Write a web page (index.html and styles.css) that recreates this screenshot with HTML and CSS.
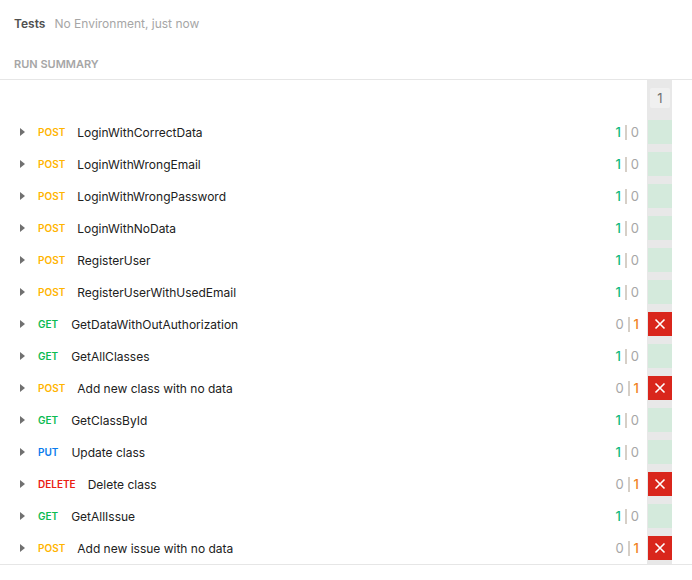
FILE: index.html
```html
<!DOCTYPE html>
<html>
<head>
<meta charset="utf-8">
<link rel="stylesheet" href="styles.css">
</head>
<body>
<header class="top">
  <span class="title">Tests</span>
  <span class="sub">No Environment, just now</span>
</header>
<div class="section">RUN SUMMARY</div>
<div class="summary">
  <div class="row head">
    <div class="main"></div>
    <div class="col"><div class="iter">1</div></div>
  </div>
  <div class="row"><div class="main"><span class="caret"></span><span class="m post">POST</span><span class="name">LoginWithCorrectData</span></div><div class="count"><span class="pass">1</span><span class="bar"></span><span class="zero">0</span></div><div class="col"><div class="cell ok"></div></div></div>
  <div class="row"><div class="main"><span class="caret"></span><span class="m post">POST</span><span class="name">LoginWithWrongEmail</span></div><div class="count"><span class="pass">1</span><span class="bar"></span><span class="zero">0</span></div><div class="col"><div class="cell ok"></div></div></div>
  <div class="row"><div class="main"><span class="caret"></span><span class="m post">POST</span><span class="name">LoginWithWrongPassword</span></div><div class="count"><span class="pass">1</span><span class="bar"></span><span class="zero">0</span></div><div class="col"><div class="cell ok"></div></div></div>
  <div class="row"><div class="main"><span class="caret"></span><span class="m post">POST</span><span class="name">LoginWithNoData</span></div><div class="count"><span class="pass">1</span><span class="bar"></span><span class="zero">0</span></div><div class="col"><div class="cell ok"></div></div></div>
  <div class="row"><div class="main"><span class="caret"></span><span class="m post">POST</span><span class="name">RegisterUser</span></div><div class="count"><span class="pass">1</span><span class="bar"></span><span class="zero">0</span></div><div class="col"><div class="cell ok"></div></div></div>
  <div class="row"><div class="main"><span class="caret"></span><span class="m post">POST</span><span class="name">RegisterUserWithUsedEmail</span></div><div class="count"><span class="pass">1</span><span class="bar"></span><span class="zero">0</span></div><div class="col"><div class="cell ok"></div></div></div>
  <div class="row"><div class="main"><span class="caret"></span><span class="m get">GET</span><span class="name">GetDataWithOutAuthorization</span></div><div class="count"><span class="zero">0</span><span class="bar"></span><span class="fail">1</span></div><div class="col"><div class="cell bad"><svg viewBox="0 0 12 12" width="12" height="12"><path d="M1.5 1.5L10.5 10.5M10.5 1.5L1.5 10.5" stroke="#fff" stroke-width="1.6" fill="none"/></svg></div></div></div>
  <div class="row"><div class="main"><span class="caret"></span><span class="m get">GET</span><span class="name">GetAllClasses</span></div><div class="count"><span class="pass">1</span><span class="bar"></span><span class="zero">0</span></div><div class="col"><div class="cell ok"></div></div></div>
  <div class="row"><div class="main"><span class="caret"></span><span class="m post">POST</span><span class="name">Add new class with no data</span></div><div class="count"><span class="zero">0</span><span class="bar"></span><span class="fail">1</span></div><div class="col"><div class="cell bad"><svg viewBox="0 0 12 12" width="12" height="12"><path d="M1.5 1.5L10.5 10.5M10.5 1.5L1.5 10.5" stroke="#fff" stroke-width="1.6" fill="none"/></svg></div></div></div>
  <div class="row"><div class="main"><span class="caret"></span><span class="m get">GET</span><span class="name">GetClassById</span></div><div class="count"><span class="pass">1</span><span class="bar"></span><span class="zero">0</span></div><div class="col"><div class="cell ok"></div></div></div>
  <div class="row"><div class="main"><span class="caret"></span><span class="m put">PUT</span><span class="name">Update class</span></div><div class="count"><span class="pass">1</span><span class="bar"></span><span class="zero">0</span></div><div class="col"><div class="cell ok"></div></div></div>
  <div class="row"><div class="main"><span class="caret"></span><span class="m del">DELETE</span><span class="name">Delete class</span></div><div class="count"><span class="zero">0</span><span class="bar"></span><span class="fail">1</span></div><div class="col"><div class="cell bad"><svg viewBox="0 0 12 12" width="12" height="12"><path d="M1.5 1.5L10.5 10.5M10.5 1.5L1.5 10.5" stroke="#fff" stroke-width="1.6" fill="none"/></svg></div></div></div>
  <div class="row"><div class="main"><span class="caret"></span><span class="m get">GET</span><span class="name">GetAllIssue</span></div><div class="count"><span class="pass">1</span><span class="bar"></span><span class="zero">0</span></div><div class="col"><div class="cell ok"></div></div></div>
  <div class="row"><div class="main"><span class="caret"></span><span class="m post">POST</span><span class="name">Add new issue with no data</span></div><div class="count"><span class="zero">0</span><span class="bar"></span><span class="fail">1</span></div><div class="col"><div class="cell bad"><svg viewBox="0 0 12 12" width="12" height="12"><path d="M1.5 1.5L10.5 10.5M10.5 1.5L1.5 10.5" stroke="#fff" stroke-width="1.6" fill="none"/></svg></div></div></div>
</div>
</body>
</html>
```
FILE: styles.css
```css
* { box-sizing: border-box; }
body {
  margin: 0;
  background: #fff;
  font-family: Inter, "Noto Sans", sans-serif;
  color: #212121;
}
.top {
  height: 47px;
  display: flex;
  align-items: center;
  padding-left: 14px;
  font-size: 12px;
}
.title { font-weight: 600; color: #505050; }
.sub { color: #a6a6a6; margin-left: 9px; }
.section {
  height: 32px;
  display: flex;
  align-items: flex-end;
  padding: 0 0 8px 14px;
  font-size: 11px;
  line-height: 13px;
  font-weight: 600;
  color: #a6a6a6;
}
.summary {
  border-top: 1px solid #e6e6e6;
  border-bottom: 1px solid #e6e6e6;
}
.row {
  display: flex;
  align-items: stretch;
  height: 32px;
  padding-right: 20px;
}
.row.head { height: 36px; }
.main {
  flex: 1;
  display: flex;
  align-items: center;
  padding-left: 20px;
  min-width: 0;
}
.caret {
  width: 0; height: 0;
  border-top: 4px solid transparent;
  border-bottom: 4px solid transparent;
  border-left: 5px solid #707070;
  margin-right: 13px;
}
.m {
  font-size: 10px;
  font-weight: 600;
  margin-right: 12px;
}
.post { color: #ffb400; }
.get { color: #0cbb52; margin-right: 13px; }
.put { color: #097bed; margin-right: 13px; }
.del { color: #eb2013; }
.name { font-size: 12px; color: #212121; }
.count {
  display: flex;
  align-items: center;
  font-size: 13px;
  padding-right: 8px;
}
.pass { color: #10b97a; font-weight: 500; }
.fail { color: #f07e1a; font-weight: 500; }
.zero { color: #a6a6a6; }
.bar {
  width: 2px;
  height: 15px;
  background: #d6cfc7;
  margin: 0 4px;
}
.col {
  width: 25px;
  background: #e8e8e8;
  padding: 4px 0 4px 1px;
}
.head .col { padding: 8px 2px 8px 3px; }
.iter {
  height: 20px;
  background: #f0f0f0;
  color: #707070;
  font-size: 13px;
  display: flex;
  align-items: center;
  justify-content: center;
  border-radius: 2px;
}
.cell { height: 24px; display: flex; align-items: center; justify-content: center; }
.ok { background: #d4eadc; }
.bad { background: #d9261c; }
```
